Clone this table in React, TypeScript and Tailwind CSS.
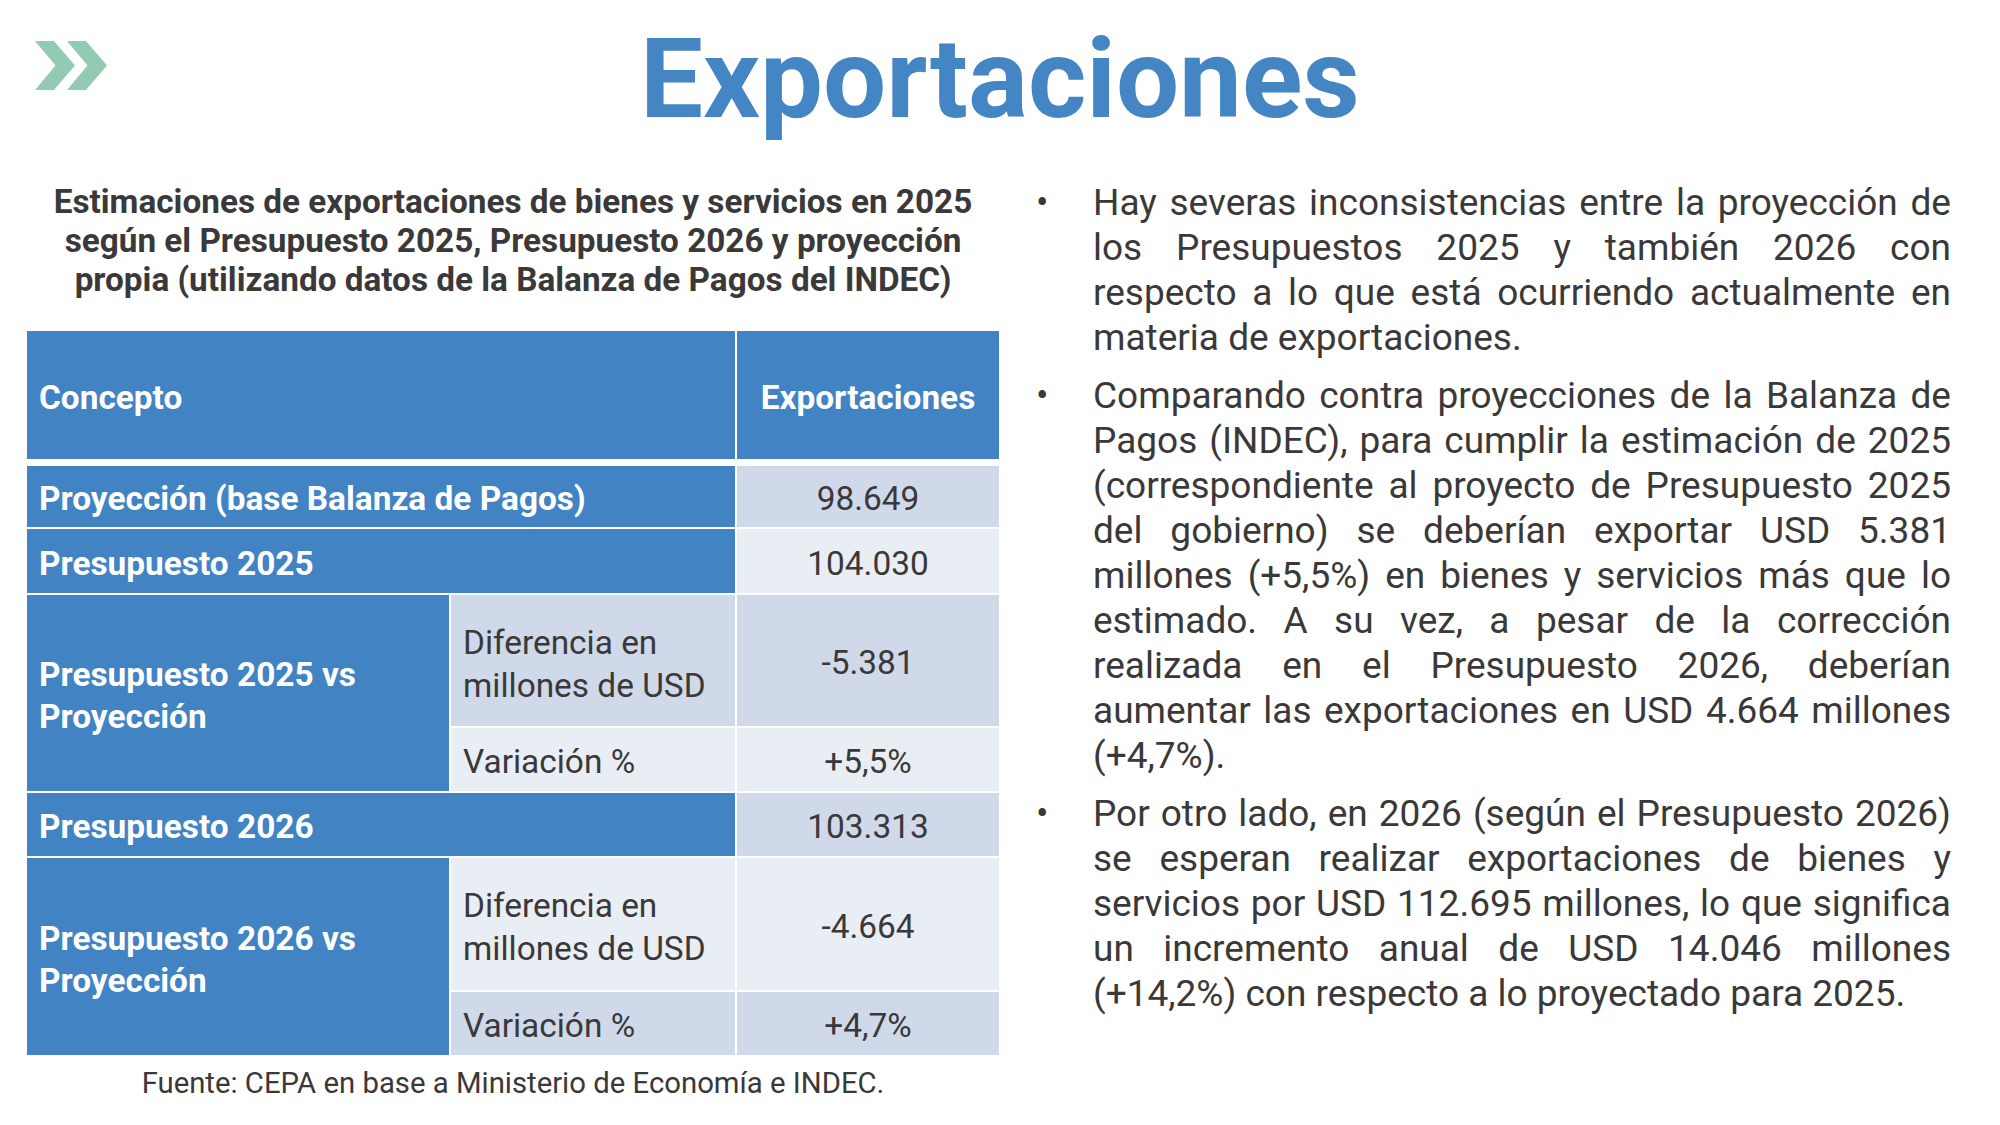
import React from 'react';

const BLUE = 'bg-[#4283c4]';

function Chevrons() {
    return (
        <svg width="73" height="49" viewBox="0 0 73 49" aria-hidden="true">
            <path d="M0 0 L19 0 L40 24.5 L19 49 L0 49 L20.5 24.5 Z" fill="#93cbb2" />
            <path d="M32 0 L51 0 L72 24.5 L51 49 L32 49 L52.5 24.5 Z" fill="#93cbb2" />
        </svg>
    );
}

const bullets = [
    'Hay severas inconsistencias entre la proyección de los Presupuestos 2025 y también 2026 con respecto a lo que está ocurriendo actualmente en materia de exportaciones.',
    'Comparando contra proyecciones de la Balanza de Pagos (INDEC), para cumplir la estimación de 2025 (correspondiente al proyecto de Presupuesto 2025 del gobierno) se deberían exportar USD 5.381 millones (+5,5%) en bienes y servicios más que lo estimado. A su vez, a pesar de la corrección realizada en el Presupuesto 2026, deberían aumentar las exportaciones en USD 4.664 millones (+4,7%).',
    'Por otro lado, en 2026 (según el Presupuesto 2026) se esperan realizar exportaciones de bienes y servicios por USD 112.695 millones, lo que significa un incremento anual de USD 14.046 millones (+14,2%) con respecto a lo proyectado para 2025.',
];

export default function App() {
    return (
        <div className="w-[2000px] h-[1125px] bg-white overflow-hidden text-[#3a3838] font-['Roboto',sans-serif]">
            {/* Header */}
            <div className="grid grid-cols-[1fr_auto_1fr] h-[182px]">
                <div className="pt-[41px] pl-[35px]">
                    <Chevrons />
                </div>
                <h1 className="pt-[23px] text-[112px] leading-none font-bold text-[#4485c4]">
                    Exportaciones
                </h1>
                <div />
            </div>

            <div className="flex">
                {/* Left: table */}
                <div className="ml-[27px] w-[972px]">
                    <p className="text-center font-bold text-[33.3px] leading-[39px] text-[#3a3838]">
                        Estimaciones de exportaciones de bienes y servicios en 2025
                        <br />
                        según el Presupuesto 2025, Presupuesto 2026 y proyección
                        <br />
                        propia (utilizando datos de la Balanza de Pagos del INDEC)
                    </p>

                    <div className="mt-[32px] text-[33.4px]">
                        <div className="grid grid-cols-[422px_284px_262px] gap-x-[2px] h-[128px] mb-[7px] [&>div]:pt-[6px]">
                            <div className={`${BLUE} col-span-2 flex items-center px-3 font-bold text-white`}>Concepto</div>
                            <div className={`${BLUE} flex items-center justify-center font-bold text-white`}>Exportaciones</div>
                        </div>

                        <div className="grid grid-cols-[422px_284px_262px] grid-rows-[61px_64px_131px_63px_63px_132px_63px] gap-[2px] [&>div]:pt-[6px]">
                            <div className={`${BLUE} col-span-2 flex items-center px-3 font-bold text-white`}>Proyección (base Balanza de Pagos)</div>
                            <div className="bg-[#cfd9e9] flex items-center justify-center">98.649</div>

                            <div className={`${BLUE} col-span-2 flex items-center px-3 font-bold text-white`}>Presupuesto 2025</div>
                            <div className="bg-[#e9edf4] flex items-center justify-center">104.030</div>

                            <div className={`${BLUE} row-span-2 flex items-center px-3 font-bold text-white leading-[42px]`}>Presupuesto 2025 vs Proyección</div>
                            <div className="bg-[#cfd9e9] flex items-center px-3 leading-[43px]">Diferencia en millones de USD</div>
                            <div className="bg-[#cfd9e9] flex items-center justify-center">-5.381</div>
                            <div className="bg-[#e9edf4] flex items-center px-3">Variación %</div>
                            <div className="bg-[#e9edf4] flex items-center justify-center">+5,5%</div>

                            <div className={`${BLUE} col-span-2 flex items-center px-3 font-bold text-white`}>Presupuesto 2026</div>
                            <div className="bg-[#cfd9e9] flex items-center justify-center">103.313</div>

                            <div className={`${BLUE} row-span-2 flex items-center px-3 font-bold text-white leading-[42px]`}>Presupuesto 2026 vs Proyección</div>
                            <div className="bg-[#e9edf4] flex items-center px-3 leading-[43px]">Diferencia en millones de USD</div>
                            <div className="bg-[#e9edf4] flex items-center justify-center">-4.664</div>
                            <div className="bg-[#cfd9e9] flex items-center px-3">Variación %</div>
                            <div className="bg-[#cfd9e9] flex items-center justify-center">+4,7%</div>
                        </div>
                    </div>

                    <p className="mt-[11px] text-center text-[29.3px] leading-[34px] text-[#3a3838]">
                        Fuente: CEPA en base a Ministerio de Economía e INDEC.
                    </p>
                </div>

                {/* Right: bullets */}
                <ul className="-mt-[2px] ml-[37px] w-[915px] flex flex-col gap-[13px] text-[37px] leading-[45px] text-[#3a3838]">
                    {bullets.map((text, i) => (
                        <li key={i} className="flex">
                            <span className="w-[57px] shrink-0">•</span>
                            <span className="w-[858px] text-justify">{text}</span>
                        </li>
                    ))}
                </ul>
            </div>
        </div>
    );
}
